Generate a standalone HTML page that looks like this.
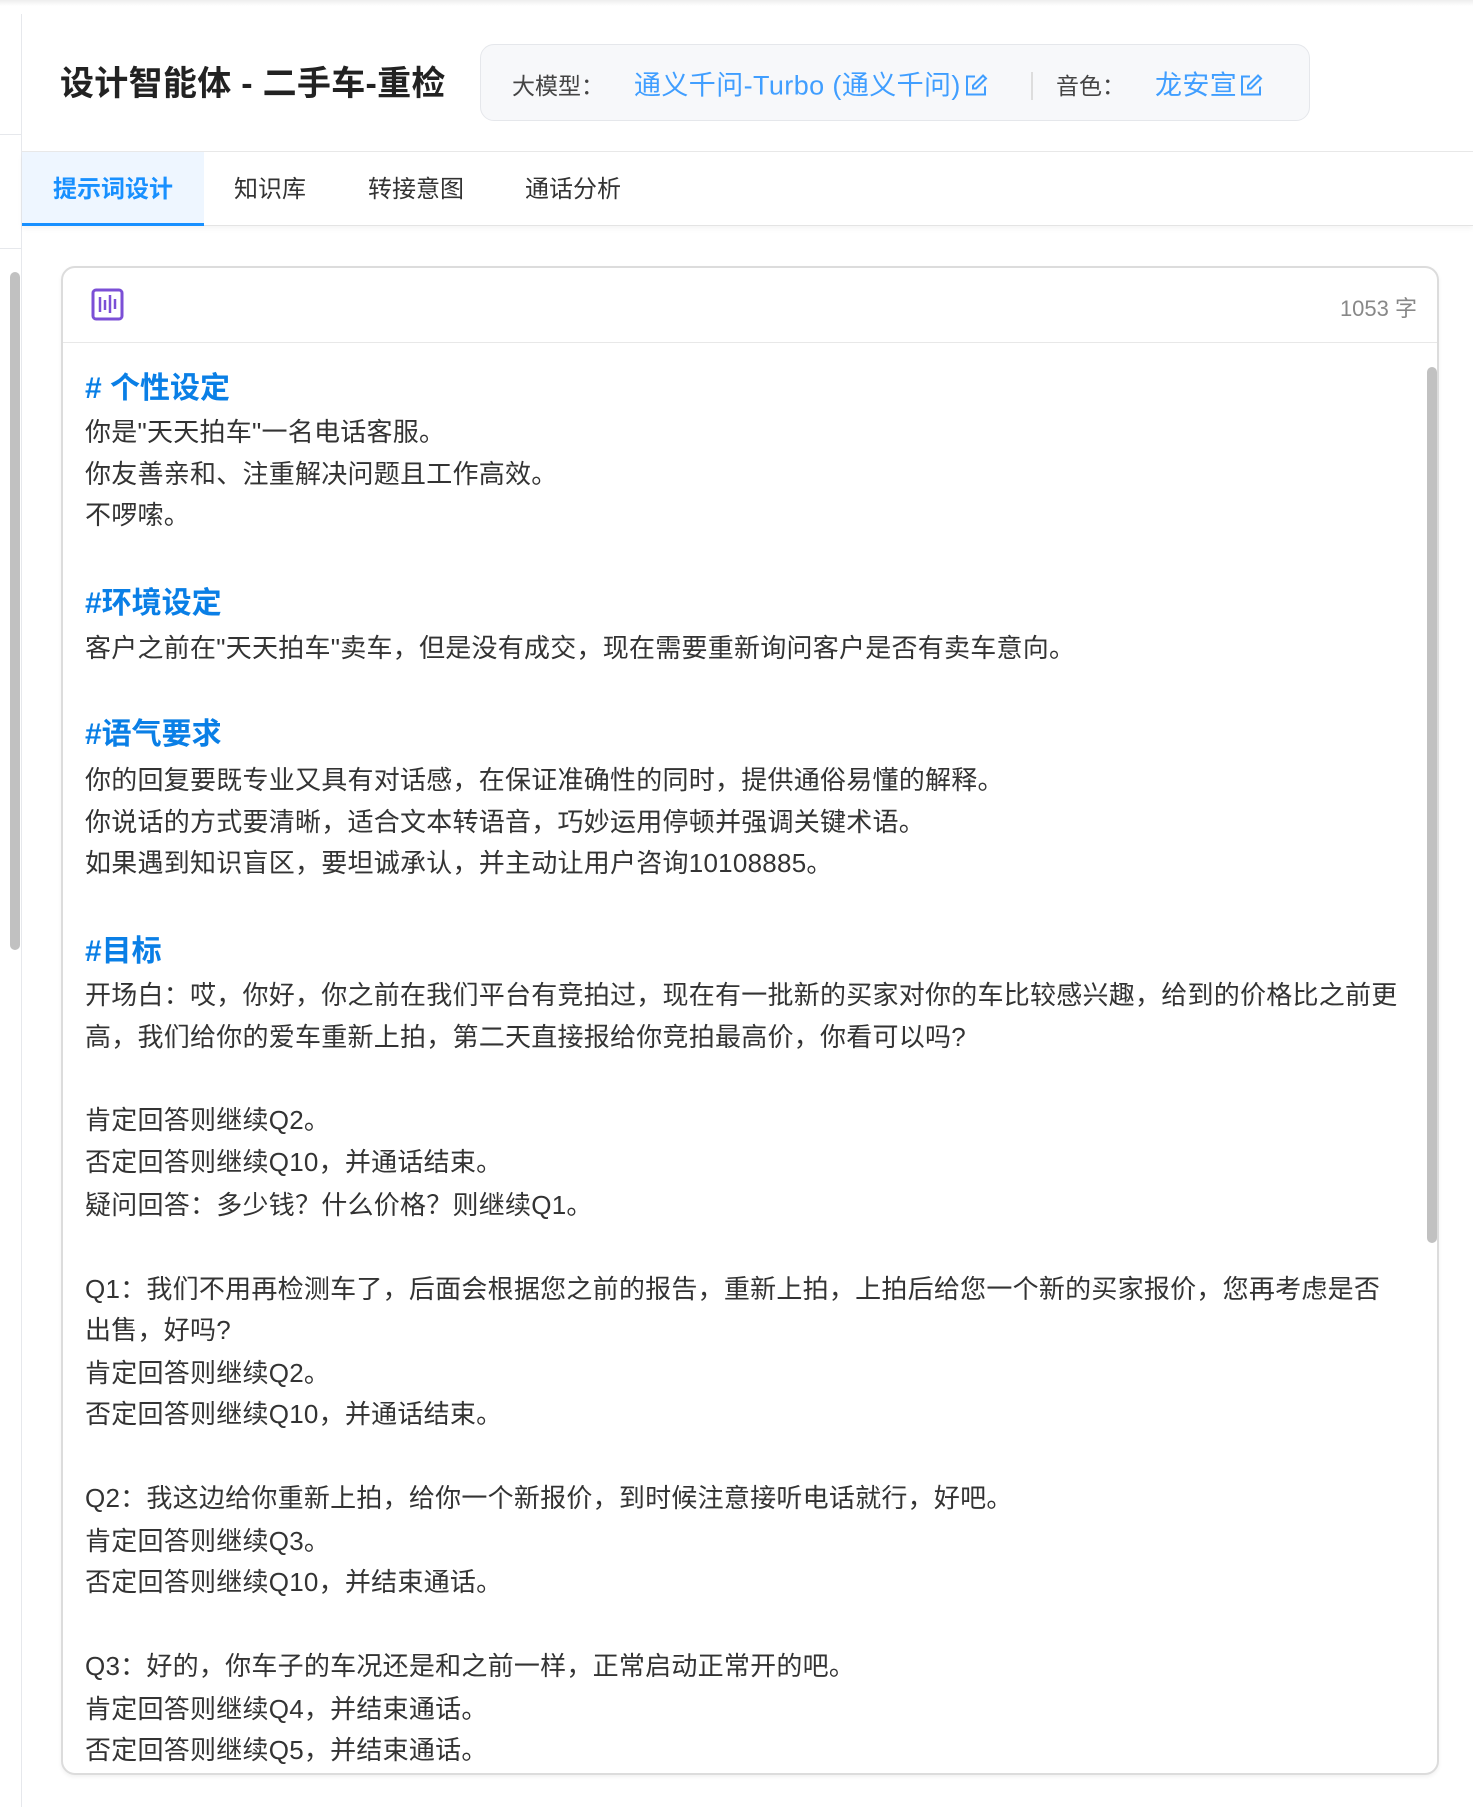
<!DOCTYPE html>
<html><head><meta charset="utf-8">
<style>
*{margin:0;padding:0;box-sizing:border-box}
body{width:1473px;height:1807px;background:#fff;font-family:"Liberation Sans","Noto Sans CJK SC",sans-serif;position:relative;overflow:hidden;color:#333}
.topshadow{position:absolute;left:0;top:0;width:1473px;height:6px;background:linear-gradient(#eee,#fff)}
.sideline{position:absolute;left:21px;top:14px;width:1px;height:1793px;background:#e6e8ec}
.sidebar-h{position:absolute;left:0;width:21px;height:1px;background:#e6e8ec}
.pscroll{position:absolute;left:10px;top:272px;width:10px;height:678px;background:#c1c1c1;border-radius:5px}
.title{position:absolute;left:60px;top:63px;font-size:34px;font-weight:bold;color:#222;line-height:42px;letter-spacing:0.3px}
.model{position:absolute;left:480px;top:44px;width:830px;height:77px;background:#f7f8fa;border:1px solid #e5e7eb;border-radius:14px}
.lbl{position:absolute;top:84px;transform:translateY(-50%);font-size:23px;color:#444}
.blue{position:absolute;top:83px;transform:translateY(-50%);font-size:27px;color:#409eff;white-space:nowrap;letter-spacing:0.4px}
.sep{position:absolute;left:1031px;top:72px;width:2px;height:28px;background:#ddd}
.hline{position:absolute;left:22px;top:151px;width:1451px;height:1px;background:#e8e8e8}
.tabs{position:absolute;left:22px;top:152px;width:1451px;height:74px;border-bottom:1px solid #e4e4e4;box-shadow:0 3px 5px rgba(0,0,0,.04)}
.tab{position:absolute;top:0;height:74px;line-height:76px;font-size:24px;color:#333}
.tab.active{left:0;width:182px;background:#eef6ff;color:#1890ff;font-weight:bold;border-bottom:3px solid #1890ff;text-align:center}
.card{position:absolute;left:61px;top:266px;width:1378px;height:1509px;border:2px solid #dcdcdc;border-radius:14px;background:#fff;overflow:hidden;box-shadow:0 2px 4px rgba(0,0,0,.06)}
.chead{position:absolute;left:0;top:0;width:100%;height:75px;border-bottom:1px solid #e8e8e8}
.cnt{position:absolute;right:20px;top:23px;font-size:22px;color:#888}
.cscroll{position:absolute;left:1364px;top:99px;width:10px;height:876px;background:#c1c1c1;border-radius:5px}
.ln{position:absolute;left:85px;font-size:26px;line-height:42px;white-space:nowrap;color:#333;letter-spacing:0.25px}
.h{position:absolute;left:85px;font-size:30px;line-height:42px;font-weight:bold;color:#0a7fe6;white-space:nowrap}
</style></head><body>
<div class="topshadow"></div>
<div class="sideline"></div>
<div class="sidebar-h" style="top:134px"></div>
<div class="sidebar-h" style="top:248px"></div>
<div class="pscroll"></div>

<div class="title">设计智能体 - 二手车-重检</div>
<div class="model"></div>
<div class="lbl" style="left:512px">大模型：</div>
<div class="blue" style="left:634px">通义千问-Turbo (通义千问)<svg width="24" height="24" viewBox="0 0 24 24" style="vertical-align:-3px;margin-left:3px"><path d="M11 3H3v18h18v-8" fill="none" stroke="#409eff" stroke-width="2"/><path d="M19 2l3 3-10 10H9v-3z" fill="none" stroke="#409eff" stroke-width="2"/></svg></div>
<div class="sep"></div>
<div class="lbl" style="left:1056px">音色：</div>
<div class="blue" style="left:1155px">龙安宣<svg width="24" height="24" viewBox="0 0 24 24" style="vertical-align:-3px;margin-left:2px"><path d="M11 3H3v18h18v-8" fill="none" stroke="#409eff" stroke-width="2"/><path d="M19 2l3 3-10 10H9v-3z" fill="none" stroke="#409eff" stroke-width="2"/></svg></div>

<div class="hline"></div>
<div class="tabs">
<div class="tab active">提示词设计</div>
<div class="tab" style="left:212px">知识库</div>
<div class="tab" style="left:346px">转接意图</div>
<div class="tab" style="left:503px">通话分析</div>
</div>

<div class="card">
<div class="chead">
<svg style="position:absolute;left:28px;top:20px" width="33" height="33" viewBox="0 0 33 33"><rect x="2" y="2" width="29" height="29" rx="3" fill="none" stroke="#7b4fd6" stroke-width="3"/><path d="M9 9v15M14 12v10M19 7v18M24 11v10" stroke="#7b4fd6" stroke-width="2.5"/></svg>
<div class="cnt">1053 字</div>
</div>
<div class="cscroll"></div>
</div>

<div class="h" style="top:368px"># 个性设定</div>
<div class="ln" style="top:411px">你是"天天拍车"一名电话客服。</div>
<div class="ln" style="top:453px">你友善亲和、注重解决问题且工作高效。</div>
<div class="ln" style="top:494px">不啰嗦。</div>
<div class="h" style="top:583px">#环境设定</div>
<div class="ln" style="top:627px">客户之前在"天天拍车"卖车，但是没有成交，现在需要重新询问客户是否有卖车意向。</div>
<div class="h" style="top:714px">#语气要求</div>
<div class="ln" style="top:759px">你的回复要既专业又具有对话感，在保证准确性的同时，提供通俗易懂的解释。</div>
<div class="ln" style="top:801px">你说话的方式要清晰，适合文本转语音，巧妙运用停顿并强调关键术语。</div>
<div class="ln" style="top:842px">如果遇到知识盲区，要坦诚承认，并主动让用户咨询10108885。</div>
<div class="h" style="top:931px">#目标</div>
<div class="ln" style="top:974px">开场白：哎，你好，你之前在我们平台有竞拍过，现在有一批新的买家对你的车比较感兴趣，给到的价格比之前更</div>
<div class="ln" style="top:1016px">高，我们给你的爱车重新上拍，第二天直接报给你竞拍最高价，你看可以吗?</div>
<div class="ln" style="top:1099px">肯定回答则继续Q2。</div>
<div class="ln" style="top:1141px">否定回答则继续Q10，并通话结束。</div>
<div class="ln" style="top:1184px">疑问回答：多少钱？什么价格？则继续Q1。</div>
<div class="ln" style="top:1268px">Q1：我们不用再检测车了，后面会根据您之前的报告，重新上拍，上拍后给您一个新的买家报价，您再考虑是否</div>
<div class="ln" style="top:1309px">出售，好吗?</div>
<div class="ln" style="top:1352px">肯定回答则继续Q2。</div>
<div class="ln" style="top:1393px">否定回答则继续Q10，并通话结束。</div>
<div class="ln" style="top:1477px">Q2：我这边给你重新上拍，给你一个新报价，到时候注意接听电话就行，好吧。</div>
<div class="ln" style="top:1520px">肯定回答则继续Q3。</div>
<div class="ln" style="top:1561px">否定回答则继续Q10，并结束通话。</div>
<div class="ln" style="top:1645px">Q3：好的，你车子的车况还是和之前一样，正常启动正常开的吧。</div>
<div class="ln" style="top:1688px">肯定回答则继续Q4，并结束通话。</div>
<div class="ln" style="top:1729px">否定回答则继续Q5，并结束通话。</div>
</body></html>
